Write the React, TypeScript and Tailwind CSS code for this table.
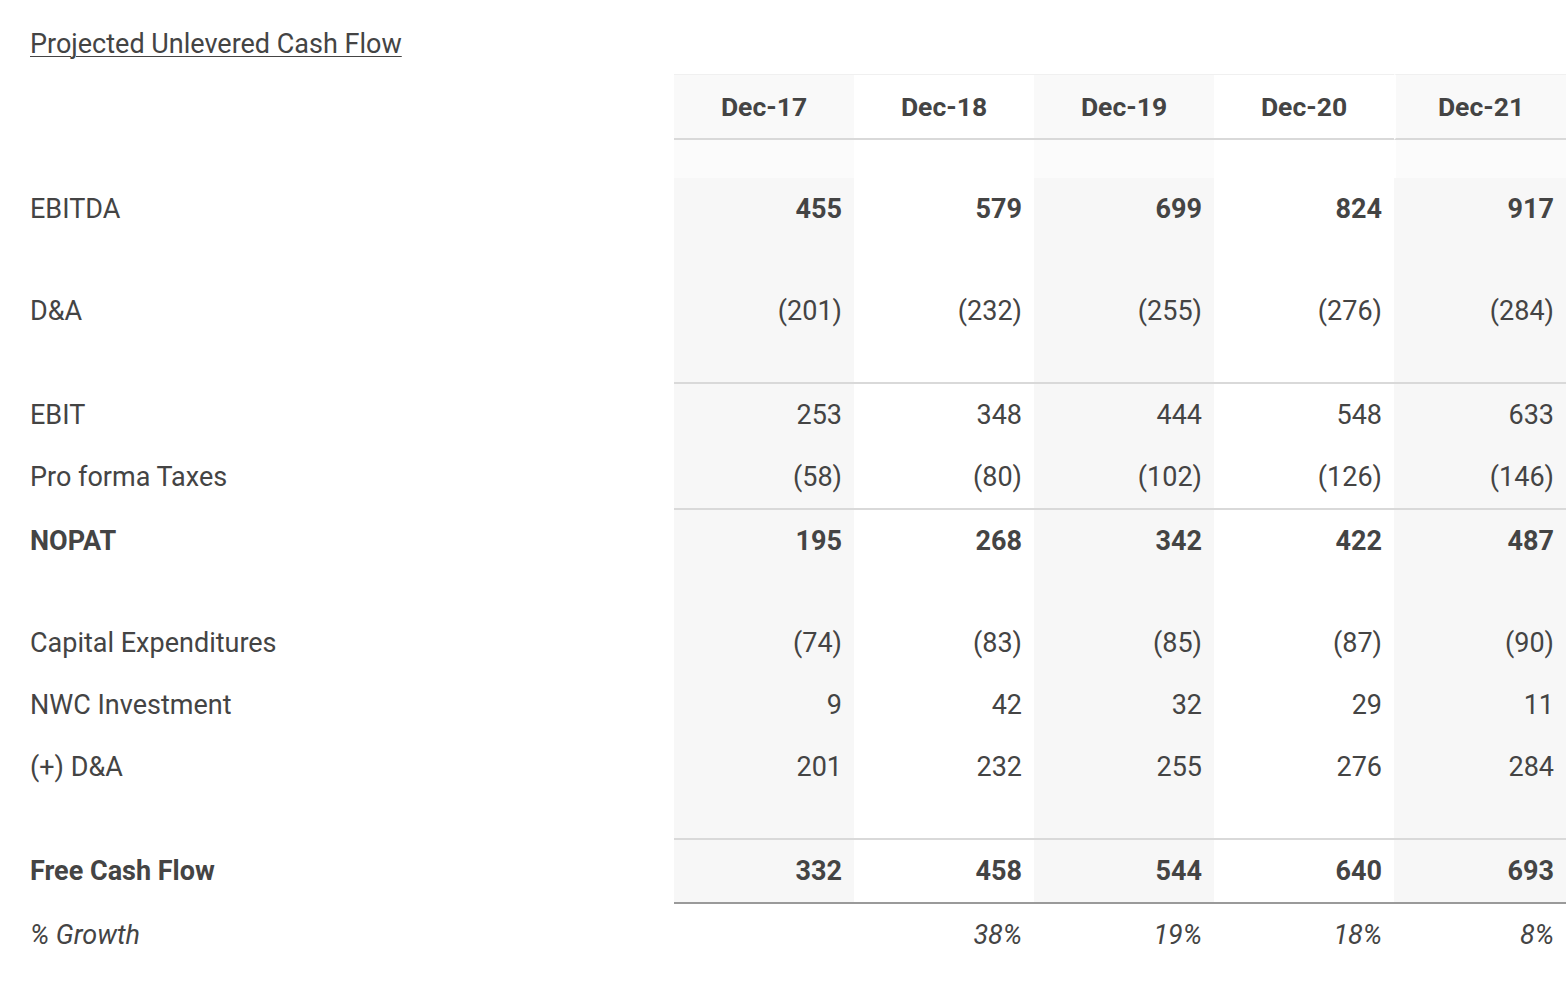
import React from 'react';

type Row =
  | { kind: 'spacer'; h: string; light?: boolean }
  | {
      kind: 'data';
      label: string;
      values: string[];
      boldLabel?: boolean;
      boldValues?: boolean;
      italic?: boolean;
      topRule?: boolean;
      bottomRule?: boolean;
    };

const years = ['Dec-17', 'Dec-18', 'Dec-19', 'Dec-20', 'Dec-21'];

const rows: Row[] = [
  { kind: 'spacer', h: 'h-[38px]', light: true },
  { kind: 'data', label: 'EBITDA', values: ['455', '579', '699', '824', '917'], boldValues: true },
  { kind: 'spacer', h: 'h-[40px]' },
  { kind: 'data', label: 'D&A', values: ['(201)', '(232)', '(255)', '(276)', '(284)'] },
  { kind: 'spacer', h: 'h-[40px]' },
  { kind: 'data', label: 'EBIT', values: ['253', '348', '444', '548', '633'], topRule: true },
  { kind: 'data', label: 'Pro forma Taxes', values: ['(58)', '(80)', '(102)', '(126)', '(146)'] },
  { kind: 'data', label: 'NOPAT', values: ['195', '268', '342', '422', '487'], topRule: true, boldLabel: true, boldValues: true },
  { kind: 'spacer', h: 'h-[40px]' },
  { kind: 'data', label: 'Capital Expenditures', values: ['(74)', '(83)', '(85)', '(87)', '(90)'] },
  { kind: 'data', label: 'NWC Investment', values: ['9', '42', '32', '29', '11'] },
  { kind: 'data', label: '(+) D&A', values: ['201', '232', '255', '276', '284'] },
  { kind: 'spacer', h: 'h-[40px]' },
  {
    kind: 'data',
    label: 'Free Cash Flow',
    values: ['332', '458', '544', '640', '693'],
    topRule: true,
    bottomRule: true,
    boldLabel: true,
    boldValues: true,
  },
  { kind: 'data', label: '% Growth', values: ['', '38%', '19%', '18%', '8%'], italic: true },
];

const grid = 'grid grid-cols-[674px_180px_180px_180px_180px_172px]';

// shaded columns: Dec-17, Dec-19, Dec-21
const shade = (i: number) => (i % 2 === 0 ? 'bg-[#f7f7f7]' : 'bg-white');

const App = () => {
  return (
    <div className="min-h-screen w-full bg-white pt-[28px] text-[#444] font-['Roboto','Liberation_Sans',sans-serif]">
      <h1 className="pl-[30px] text-[27px] leading-[32px] underline underline-offset-[3px] decoration-1 mb-[14px]">
        Projected Unlevered Cash Flow
      </h1>

      {/* header */}
      <div className={grid}>
        <div />
        {years.map((y, i) => (
          <div
            key={y}
            className={`h-[66px] pt-[1px] border-t border-t-[#f0f0f0] border-b-2 border-b-[#d9d9d9] flex items-center justify-center text-[26.5px] font-bold ${
              i % 2 === 0 ? 'bg-[#f9f9f9]' : 'bg-white'
            } ${i === 4 ? 'border-l-2 border-l-white' : ''}`}
          >
            {y}
          </div>
        ))}
      </div>

      {rows.map((r, idx) => {
        if (r.kind === 'spacer') {
          return (
            <div key={idx} className={grid}>
              <div className={r.h} />
              {years.map((y, i) => (
                <div
                  key={y}
                  className={`${r.h} ${
                    i % 2 === 0 ? (r.light ? 'bg-[#fbfbfb]' : 'bg-[#f7f7f7]') : 'bg-white'
                  } ${r.light && i === 4 ? 'border-l-2 border-l-white' : ''}`}
                />
              ))}
            </div>
          );
        }
        const rule = `${r.topRule ? 'border-t-2 border-t-[#d9d9d9]' : ''} ${
          r.bottomRule ? 'border-b-2 border-b-[#9a9a9a]' : ''
        }`;
        return (
          <div key={idx} className={grid}>
            <div
              className={`h-[62px] pl-[30px] flex items-center text-[27px] ${r.topRule ? 'mt-[2px]' : ''} ${
                r.boldLabel ? 'font-bold' : ''
              } ${r.italic ? 'italic' : ''}`}
            >
              {r.label}
            </div>
            {r.values.map((v, i) => (
              <div
                key={i}
                className={`flex items-center justify-end pr-[12px] pt-[1px] text-[27px] ${rule} ${
                  r.italic ? 'italic bg-white' : shade(i)
                } ${r.boldValues ? 'font-bold' : ''} ${
                  r.topRule && r.bottomRule ? 'h-[66px]' : r.topRule ? 'h-[64px]' : 'h-[62px]'
                }`}
              >
                {v}
              </div>
            ))}
          </div>
        );
      })}
    </div>
  );
};

export default App;
